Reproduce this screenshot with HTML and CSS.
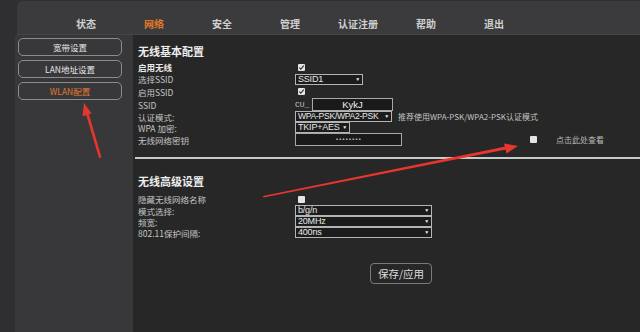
FILE: index.html
```html
<!DOCTYPE html>
<html lang="zh-CN">
<head>
    <meta charset="UTF-8">
    <title>WLAN配置</title>
    <link rel="stylesheet" href="styles.css">
</head>
<body>
    <div class="page">
        <div class="topbar">
            <a class="nav-item">状态</a>
            <a class="nav-item active">网络</a>
            <a class="nav-item">安全</a>
            <a class="nav-item">管理</a>
            <a class="nav-item">认证注册</a>
            <a class="nav-item">帮助</a>
            <a class="nav-item">退出</a>
        </div>
        <div class="main">
            <div class="sidebar">
                <a class="side-btn">宽带设置</a>
                <a class="side-btn">LAN地址设置</a>
                <a class="side-btn active">WLAN配置</a>
            </div>
            <div class="content">
                <h2 class="section-title">无线基本配置</h2>
                <div class="row h12">
                    <span class="label strong">启用无线</span>
                    <span class="cb on"><svg viewBox="0 0 8 8"><path d="M1.5 4.2 L3.2 6 L6.5 1.8" /></svg></span>
                </div>
                <div class="row h12">
                    <span class="label">选择SSID</span>
                    <div class="select w68">SSID1<span class="caret">▼</span></div>
                </div>
                <div class="row h13">
                    <span class="label">启用SSID</span>
                    <span class="cb on"><svg viewBox="0 0 8 8"><path d="M1.5 4.2 L3.2 6 L6.5 1.8" /></svg></span>
                </div>
                <div class="row h13">
                    <span class="label">SSID</span>
                    <span class="prefix">CU_</span>
                    <div class="input w81">KykJ</div>
                </div>
                <div class="row h11">
                    <span class="label">认证模式:</span>
                    <div class="select w97 tight">WPA-PSK/WPA2-PSK<span class="caret">▼</span></div>
                    <span class="hint">推荐使用WPA-PSK/WPA2-PSK认证模式</span>
                </div>
                <div class="row h11">
                    <span class="label">WPA 加密:</span>
                    <div class="select w55">TKIP+AES<span class="caret">▼</span></div>
                </div>
                <div class="row h13">
                    <span class="label">无线网络密钥</span>
                    <div class="input w107 dots">••••••••</div>
                    <span class="cb show"></span>
                    <span class="show-text">点击此处查看</span>
                </div>

                <div class="divider"></div>

                <h2 class="section-title second">无线高级设置</h2>
                <div class="row h12">
                    <span class="label">隐藏无线网络名称</span>
                    <span class="cb"></span>
                </div>
                <div class="row h11">
                    <span class="label">模式选择:</span>
                    <div class="select w137">b/g/n<span class="caret">▼</span></div>
                </div>
                <div class="row h11">
                    <span class="label">频宽:</span>
                    <div class="select w137">20MHz<span class="caret">▼</span></div>
                </div>
                <div class="row h11">
                    <span class="label">802.11保护间隔:</span>
                    <div class="select w137">400ns<span class="caret">▼</span></div>
                </div>

                <button class="save-btn">保存/应用</button>
            </div>
        </div>

        <!-- red annotation arrows drawn over the screenshot -->
        <svg class="annot" width="640" height="332" viewBox="0 0 640 332">
            <polygon points="99,158 101.5,157.5 88.5,113 86,114" fill="#e8352e" />
            <polygon points="84,103 91.6,113.6 82.6,116.2" fill="#e8352e" />
            <polygon points="263,196 263.5,197.5 506,149.5 505.5,146.5" fill="#e8352e" />
            <polygon points="518,146 506.5,153.5 504,143.5" fill="#e8352e" />
        </svg>
    </div>
</body>
</html>
```

FILE: styles.css
```css
body {
    margin: 0;
    padding: 0;
    background-color: #2f2f31;
    font-family: "Noto Sans CJK SC", sans-serif;
    color: #c8c8c8;
}
.page {
    position: relative;
    width: 640px;
    height: 332px;
    overflow: hidden;
    padding-left: 15px;
    box-sizing: border-box;
}
.topbar {
    display: flex;
    align-items: flex-end;
    height: 34px;
    margin-top: 1px;
    margin-left: 2px;
    padding-left: 35px;
    padding-bottom: 3px;
    box-sizing: border-box;
    background-color: #3b3b3d;
    border-radius: 6px 0 0 0;
    border-bottom: 1px solid #454547;
}
.nav-item {
    width: 68px;
    text-align: center;
    font-size: 10px;
    font-weight: bold;
    line-height: 14px;
    color: #d0d0d0;
}
.nav-item.active {
    color: #e0782c;
}
.main {
    display: flex;
    height: 297px;
}
.sidebar {
    width: 118px;
    background-color: #38383a;
    padding: 3px 0 0 3px;
    box-sizing: border-box;
    display: flex;
    flex-direction: column;
    gap: 4px;
}
.side-btn {
    width: 104px;
    height: 18px;
    box-sizing: border-box;
    border: 1px solid #8c8c8c;
    border-radius: 5px;
    font-size: 8.5px;
    line-height: 16px;
    text-align: center;
    color: #e6e6e6;
}
.side-btn.active {
    color: #e07a30;
}
.content {
    flex: 1;
    background-color: #272727;
    padding: 9px 0 0 5px;
}
.section-title {
    margin: 0 0 3px 0;
    font-size: 11px;
    line-height: 14px;
    font-weight: bold;
    color: #ececec;
}
.section-title.second {
    margin-top: 15px;
    margin-bottom: 5px;
}
.row {
    display: flex;
    align-items: center;
}
.h11 { height: 11px; }
.h12 { height: 12px; }
.h13 { height: 13px; }
.label {
    width: 157px;
    flex: none;
    font-size: 8.5px;
    color: #c4c4c4;
    white-space: nowrap;
}
.label.strong {
    color: #e8e8e8;
    font-weight: bold;
}
.cb {
    width: 7px;
    height: 7px;
    margin-left: 3px;
    background-color: #e4e4e4;
    border-radius: 1px;
    display: flex;
}
.cb svg {
    width: 7px;
    height: 7px;
    fill: none;
    stroke: #2a2a2a;
    stroke-width: 1.3;
}
.cb.show {
    margin-left: 128px;
}
.show-text {
    margin-left: 19px;
    font-size: 8px;
    color: #b8b8b8;
}
.select {
    position: relative;
    flex: none;
    height: 11px;
    box-sizing: border-box;
    border: 1px solid #b4b4b4;
    background-color: #1c1c1c;
    font-family: "Liberation Sans", Arial, sans-serif;
    font-size: 9px;
    line-height: 9px;
    letter-spacing: -0.2px;
    white-space: nowrap;
    overflow: hidden;
    color: #e8e8e8;
    padding-left: 2px;
}
.select.tight {
    font-size: 8.6px;
    letter-spacing: -0.3px;
}
.caret {
    position: absolute;
    right: 2px;
    top: 0;
    font-size: 5px;
    line-height: 9px;
    background-color: #1c1c1c;
    padding-left: 1px;
}
.w55 { width: 55px; }
.w68 { width: 68px; }
.w97 { width: 97px; }
.w137 { width: 137px; }
.w81 { width: 81px; }
.w107 { width: 107px; }
.prefix {
    width: 17px;
    font-family: "Liberation Mono", monospace;
    font-size: 8px;
    color: #c4c4c4;
}
.input {
    flex: none;
    height: 13px;
    box-sizing: border-box;
    border: 1px solid #a8a8a8;
    background-color: #1a1a1a;
    font-family: "Liberation Sans", Arial, sans-serif;
    font-size: 9.5px;
    line-height: 11px;
    text-align: center;
    color: #f0f0f0;
}
.input.dots {
    font-family: "DejaVu Sans", sans-serif;
    font-size: 5px;
    letter-spacing: 0.3px;
}
.hint {
    margin-left: 6px;
    font-size: 8px;
    color: #c4c4c4;
    white-space: nowrap;
}
.divider {
    height: 2px;
    margin: 11px 0 0 -3px;
    background-color: #c9c9c9;
}
.save-btn {
    display: block;
    margin: 25px 0 0 232px;
    width: 62px;
    height: 21px;
    padding: 0;
    background: transparent;
    border: 1px solid #7a7a7a;
    border-radius: 4px;
    font-family: "Noto Sans CJK SC", sans-serif;
    font-size: 10.5px;
    color: #dcdcdc;
}
.annot {
    position: absolute;
    left: 0;
    top: 0;
    pointer-events: none;
}
```
